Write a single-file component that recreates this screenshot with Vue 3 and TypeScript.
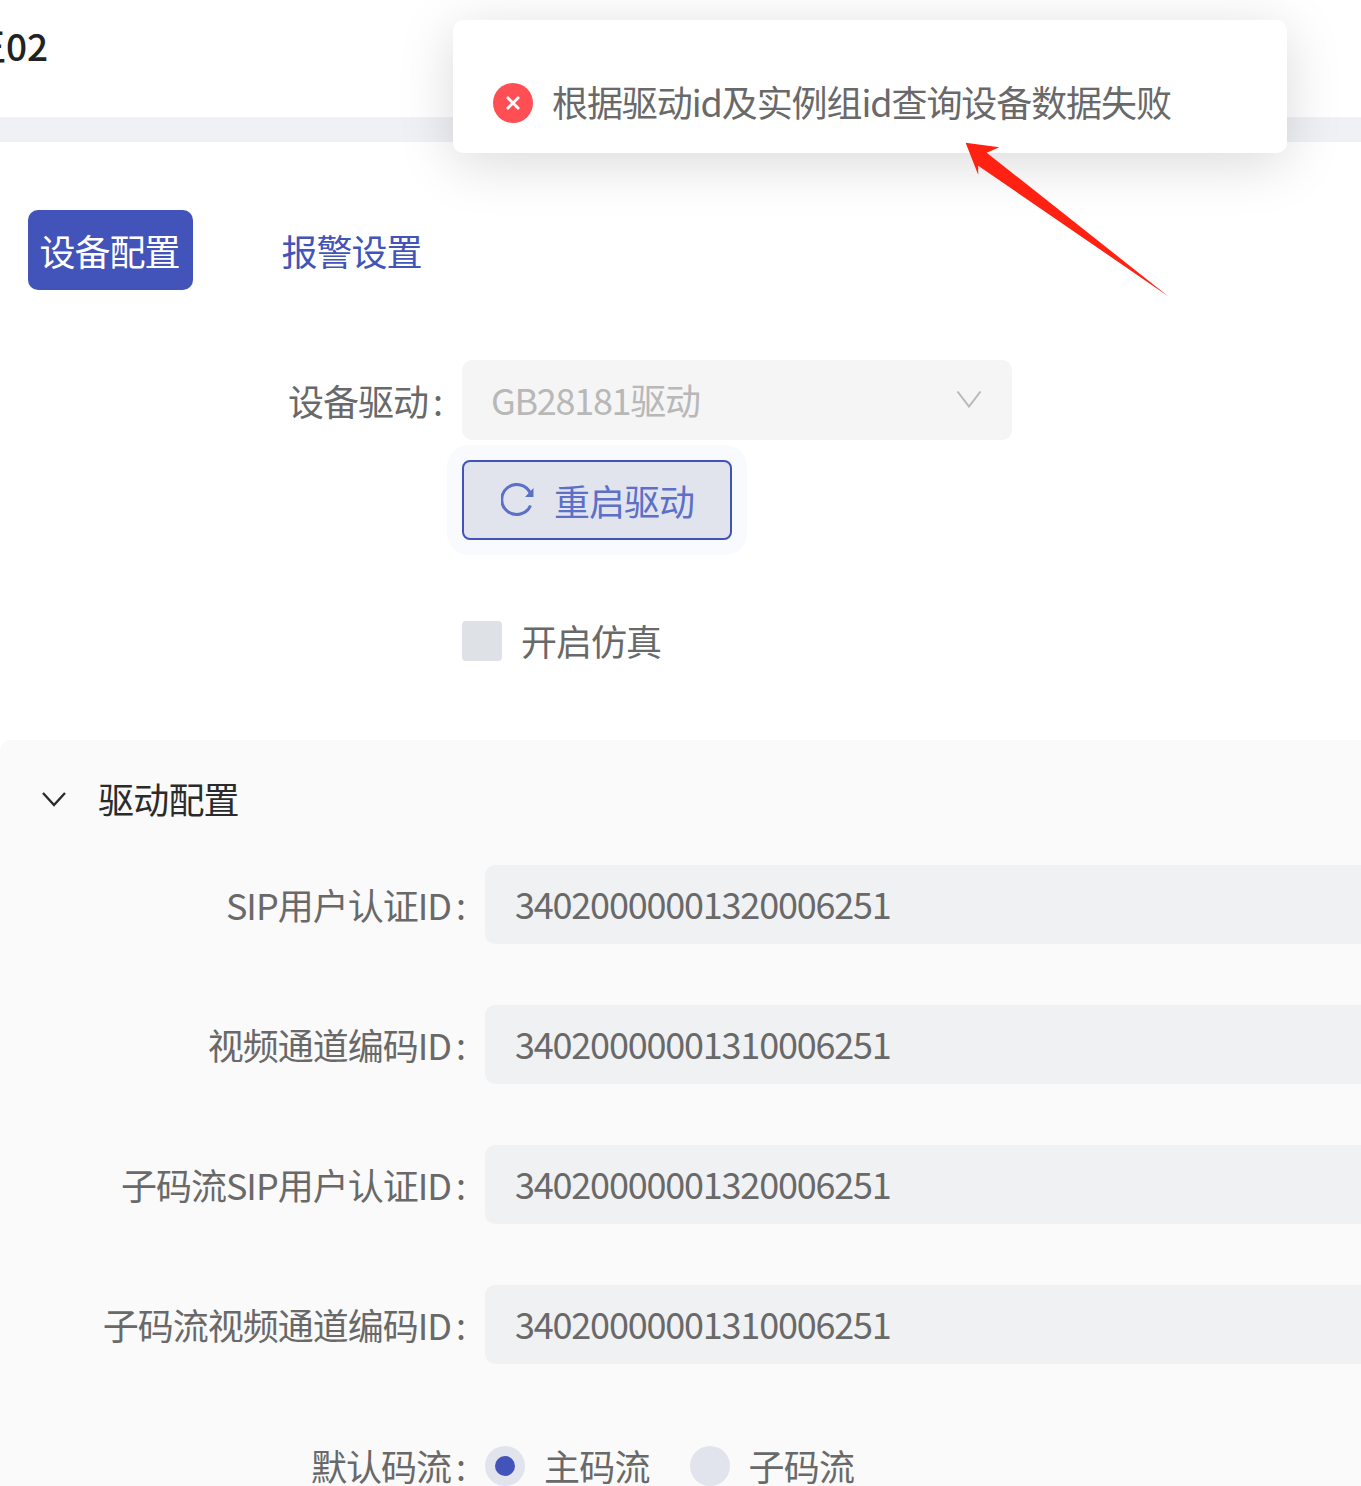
<script setup lang="ts">
interface Field {
  label: string
  value: string
}

const fields: Field[] = [
  { label: "SIP用户认证ID", value: "34020000001320006251" },
  { label: "视频通道编码ID", value: "34020000001310006251" },
  { label: "子码流SIP用户认证ID", value: "34020000001320006251" },
  { label: "子码流视频通道编码ID", value: "34020000001310006251" },
]
</script>

<template>
  <div class="page">
    <header class="top">
      <span class="title">王02</span>
    </header>
    <div class="band"></div>

    <main class="content">
      <nav class="tabs">
        <span class="tab active">设备配置</span>
        <span class="tab">报警设置</span>
      </nav>

      <div class="driver-row">
        <label class="driver-label">设备驱动<span class="colon">:</span></label>
        <div class="select">
          <span class="select-text">GB28181驱动</span>
          <svg width="26" height="18" viewBox="0 0 26 18" fill="none" stroke="#b8b8b8" stroke-width="2">
            <path d="M1.5 1.5 13 16.5 24.5 1.5" />
          </svg>
        </div>
      </div>

      <button class="restart">
        <svg width="34" height="34" viewBox="0 0 34 34" fill="none">
          <path d="M29.5 22.5A15 15 0 1 1 29.5 10.5" stroke="#5c70c8" stroke-width="3" />
          <path d="M32.5 5V14H24Z" fill="#5c70c8" />
        </svg>
        <span>重启驱动</span>
      </button>

      <div class="check">
        <span class="box"></span>
        <span class="check-text">开启仿真</span>
      </div>

      <section class="panel">
        <div class="panel-head">
          <svg width="26" height="16" viewBox="0 0 26 16" fill="none" stroke="#2b2b2b" stroke-width="2.4">
            <path d="M2 2 13 14 24 2" />
          </svg>
          <span class="panel-title">驱动配置</span>
        </div>

        <div v-for="f in fields" :key="f.label" class="field">
          <label class="field-label">{{ f.label }}<span class="colon">:</span></label>
          <div class="input">{{ f.value }}</div>
        </div>

        <div class="field radios">
          <label class="field-label">默认码流<span class="colon">:</span></label>
          <span class="radio on"><i></i></span>
          <span class="radio-text">主码流</span>
          <span class="radio second"></span>
          <span class="radio-text">子码流</span>
        </div>
      </section>
    </main>

    <div class="toast">
      <svg class="toast-icon" width="40" height="40" viewBox="0 0 40 40">
        <circle cx="20" cy="20" r="20" fill="#ff4f55" />
        <path d="M14 14 26 26M26 14 14 26" stroke="#fff" stroke-width="2.8" fill="none" />
      </svg>
      <span class="toast-text">根据驱动id及实例组id查询设备数据失败</span>
    </div>

    <svg class="arrow" width="1361" height="320" viewBox="0 0 1361 320">
      <polygon points="965.6,142.7 999.3,147.3 986.7,152.7 1168.8,296.7 978.2,165.7 978.2,174.7" fill="#ff2212" />
    </svg>
  </div>
</template>

<style>
html,
body {
  margin: 0;
  background: #fff;
}
</style>

<style scoped>
.page {
  position: relative;
  width: 1361px;
  height: 1486px;
  overflow: hidden;
  background: #fff;
  font-family: "Noto Sans CJK SC", "Noto Sans", sans-serif;
  font-size: 36px;
  letter-spacing: -1px;
  color: #696969;
}

.top {
  height: 117px;
  display: flex;
  align-items: center;
}

.title {
  margin-left: -31px;
  margin-top: -28px;
  font-size: 37px;
  font-weight: 500;
  letter-spacing: 0;
  color: #222;
}

.band {
  height: 25px;
  background: #f0f1f4;
}

.tabs {
  display: flex;
  gap: 62px;
  margin: 68px 0 0 28px;
}

.tab {
  width: 165px;
  height: 80px;
  line-height: 80px;
  text-align: center;
  border-radius: 10px;
  color: #4254b9;
}

.tab.active {
  background: #4254b9;
  color: #fff;
  text-indent: -2px;
  margin-right: 14px;
}

.driver-row {
  display: flex;
  align-items: center;
  margin-top: 70px;
}

.driver-label {
  width: 442px;
  text-align: right;
  margin-right: 20px;
}

.colon {
  margin-left: 5px;
}

.select {
  width: 550px;
  height: 80px;
  padding: 0 30px 2px 29px;
  box-sizing: border-box;
  display: flex;
  align-items: center;
  justify-content: space-between;
  background: #f5f5f5;
  border-radius: 10px;
  color: #b8b8b8;
}

.select-text {
  letter-spacing: -1.3px;
}

.restart {
  display: flex;
  align-items: center;
  gap: 19px;
  width: 270px;
  height: 80px;
  margin: 20px 0 0 462px;
  padding: 0 0 0 37px;
  box-sizing: border-box;
  background: #e1e4ed;
  border: 2px solid #4254b9;
  border-radius: 8px;
  box-shadow: 0 0 0 15px #f9fafd;
  font: inherit;
  letter-spacing: inherit;
  color: #5c70c8;
}

.check {
  display: flex;
  align-items: center;
  gap: 19px;
  height: 40px;
  margin: 81px 0 0 462px;
}

.check-text {
  padding-bottom: 2px;
}

.box {
  width: 40px;
  height: 40px;
  background: #dee2e6;
  border-radius: 4px;
}

.panel {
  margin-top: 79px;
  height: 746px;
  background: #fafafa;
  border-radius: 10px 0 0 0;
}

.panel-head {
  display: flex;
  align-items: center;
  gap: 31px;
  height: 117px;
  margin-bottom: 8px;
  padding-left: 41px;
  color: #2b2b2b;
}

.panel-title {
  padding-bottom: 2px;
  letter-spacing: -0.8px;
}

.field {
  display: flex;
  align-items: center;
  height: 79px;
  margin-bottom: 61px;
}

.field-label {
  flex: none;
  width: 465px;
  margin-right: 20px;
  padding-bottom: 2px;
  text-align: right;
}

.input {
  flex: 1;
  height: 77px;
  line-height: 77px;
  padding: 0 0 2px 30px;
  letter-spacing: -1.2px;
  background: #f0f1f3;
  border-radius: 10px 0 0 10px;
}

.radios {
  height: 40px;
  margin: 82px 0 0;
}

.radio {
  width: 40px;
  height: 40px;
  border-radius: 50%;
  background: #e1e4ed;
  display: flex;
  align-items: center;
  justify-content: center;
}

.radio i {
  width: 20px;
  height: 20px;
  border-radius: 50%;
  background: #4254b9;
}

.radio-text {
  margin-left: 19px;
  padding-bottom: 2px;
  letter-spacing: -0.8px;
}

.radio.second {
  margin-left: 40px;
}

.toast {
  position: absolute;
  left: 453px;
  top: 20px;
  width: 834px;
  height: 133px;
  box-sizing: border-box;
  padding: 33px 0 0 40px;
  display: flex;
  align-items: center;
  gap: 19px;
  background: #fff;
  border-radius: 10px;
  box-shadow: 0 10px 55px rgba(0, 0, 0, 0.15);
}

.toast-icon {
  flex: none;
}

.toast-text {
  padding-bottom: 4px;
  letter-spacing: -1.08px;
}

.arrow {
  position: absolute;
  left: 0;
  top: 0;
  pointer-events: none;
}
</style>
